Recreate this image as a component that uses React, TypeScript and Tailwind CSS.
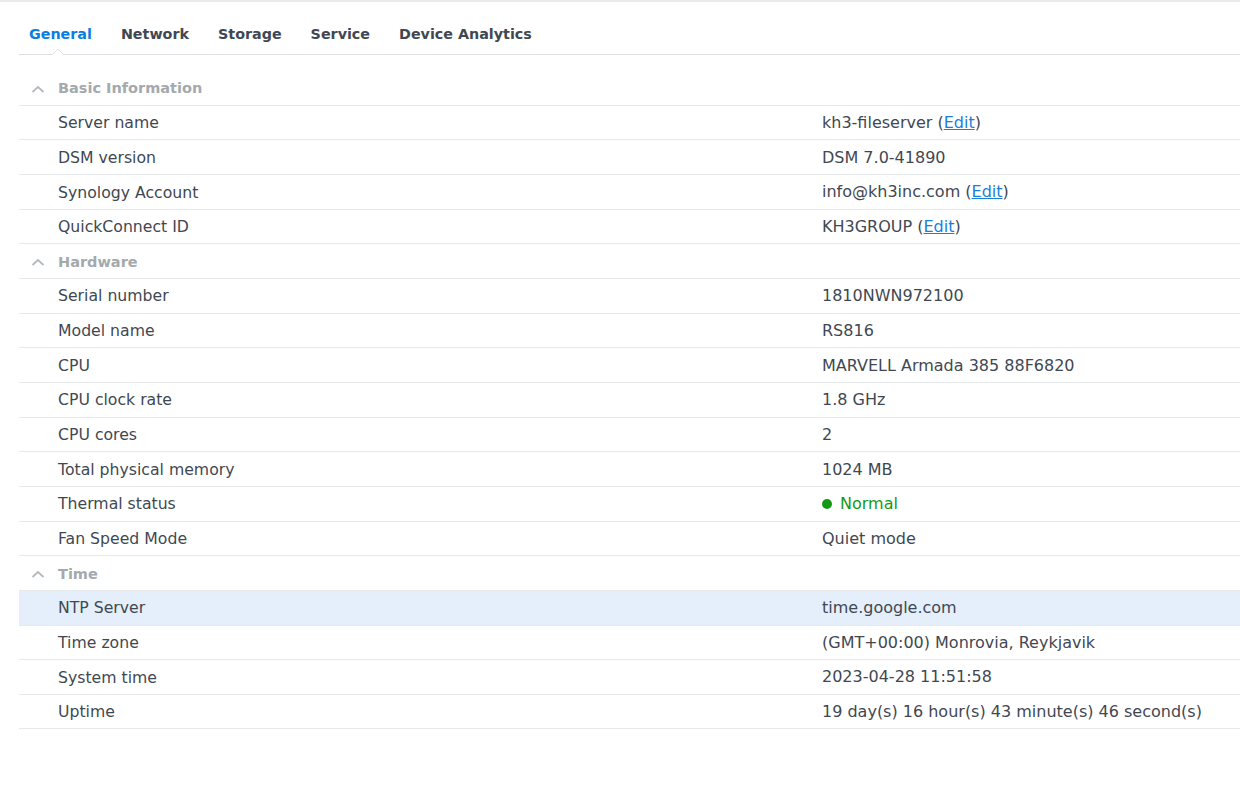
import React from "react";

type Row = { label: string; value: React.ReactNode; selected?: boolean };
type Section = { title: string; rows: Row[] };

const Edit = () => (
  <>
    {" ("}
    <span className="text-[#1a7fd8] underline underline-offset-[1px]">Edit</span>
    {")"}
  </>
);

const sections: Section[] = [
  {
    title: "Basic Information",
    rows: [
      { label: "Server name", value: <>kh3-fileserver<Edit /></> },
      { label: "DSM version", value: "DSM 7.0-41890" },
      { label: "Synology Account", value: <>info@kh3inc.com<Edit /></> },
      { label: "QuickConnect ID", value: <>KH3GROUP<Edit /></> },
    ],
  },
  {
    title: "Hardware",
    rows: [
      { label: "Serial number", value: "1810NWN972100" },
      { label: "Model name", value: "RS816" },
      { label: "CPU", value: "MARVELL Armada 385 88F6820" },
      { label: "CPU clock rate", value: "1.8 GHz" },
      { label: "CPU cores", value: "2" },
      { label: "Total physical memory", value: "1024 MB" },
      {
        label: "Thermal status",
        value: (
          <span className="flex items-center gap-[8px] text-[#139a13]">
            <span className="w-[10px] h-[10px] rounded-full bg-[#139a13] inline-block" />
            Normal
          </span>
        ),
      },
      { label: "Fan Speed Mode", value: "Quiet mode" },
    ],
  },
  {
    title: "Time",
    rows: [
      { label: "NTP Server", value: "time.google.com", selected: true },
      { label: "Time zone", value: "(GMT+00:00) Monrovia, Reykjavik" },
      { label: "System time", value: "2023-04-28 11:51:58" },
      { label: "Uptime", value: "19 day(s) 16 hour(s) 43 minute(s) 46 second(s)" },
    ],
  },
];

const tabs = ["General", "Network", "Storage", "Service", "Device Analytics"];

function Chevron() {
  return (
    <svg width="14" height="9" viewBox="0 0 14 9" className="block">
      <path d="M1.5 7 L7 2 L12.5 7" fill="none" stroke="#b4b9be" strokeWidth="1.8" />
    </svg>
  );
}

export default function App() {
  return (
    <div
      className="w-[1240px] h-[793px] bg-white border-t-2 border-[#e8ebee] overflow-hidden text-[#3f4852]"
      style={{ fontFamily: '"DejaVu Sans", Verdana, sans-serif' }}
    >
      <div className="pl-[19px]">
        <div className="relative flex items-start h-[53px] border-b border-[#dde1e5] pl-[10px] pt-[23px] gap-[29px] text-[14.3px] leading-[18px] font-bold">
          {tabs.map((t, i) => (
            <div key={t} className={i === 0 ? "text-[#0a7fe0]" : "text-[#3f4852]"}>
              {t}
            </div>
          ))}
          <div className="absolute left-[33px] bottom-[-1px] w-[12px] h-[7px]">
            <svg width="12" height="7" viewBox="0 0 12 7" className="block">
              <path d="M0 7 L6 1 L12 7" fill="white" stroke="#dde1e5" strokeWidth="1" />
            </svg>
          </div>
        </div>
        <div className="pt-[16px]">
          {sections.map((s) => (
            <div key={s.title}>
              <div className="flex items-center h-[34.67px] pt-[3px] border-b border-[#e6e9ec] text-[14.5px] font-bold text-[#a4a9ae]">
                <div className="w-[39px] pl-[12px] flex items-center">
                  <Chevron />
                </div>
                <div>{s.title}</div>
              </div>
              {s.rows.map((r) => (
                <div
                  key={r.label}
                  className={
                    "flex items-center h-[34.67px] pt-[1px] border-b border-[#e6e9ec] text-[16px] " +
                    (r.selected ? "bg-[#e4effb]" : "")
                  }
                >
                  <div className="w-[803px] pl-[39px] text-[15.7px]">{r.label}</div>
                  <div>{r.value}</div>
                </div>
              ))}
            </div>
          ))}
        </div>
      </div>
    </div>
  );
}
